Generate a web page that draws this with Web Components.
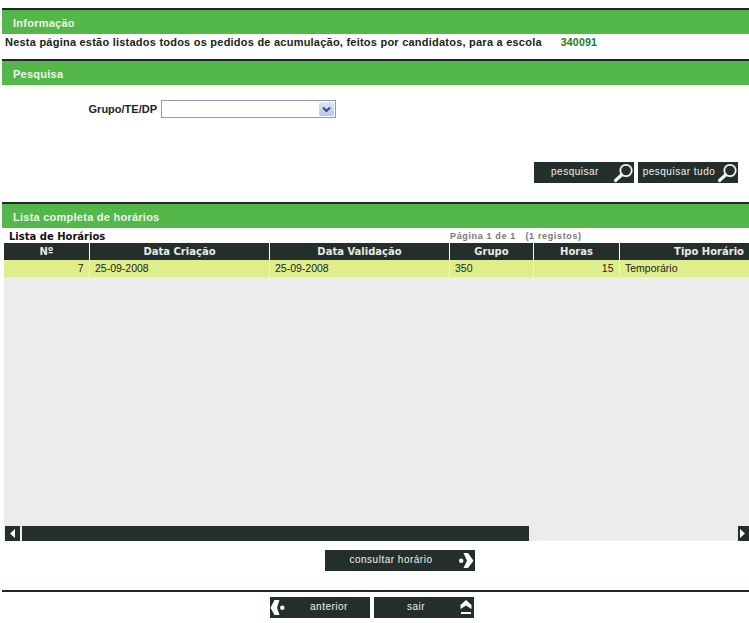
<!DOCTYPE html>
<html lang="pt"><head><meta charset="utf-8"><title>Horários</title>
<style>
html,body{margin:0;padding:0;background:#fff}
body{width:749px;height:623px;overflow:hidden;font-family:"Liberation Sans",Arial,sans-serif;font-size:11px;color:#111}
app-page{display:block}
</style></head><body>
<app-page></app-page>
<script>
const ICONS={
search:'<svg width="22" height="21" viewBox="0 0 22 21" style="margin-left:-4px"><circle cx="14" cy="8.500" r="5.700" fill="none" stroke="#f2f4f2" stroke-width="1.800"/><path d="M9.500 13 3.500 18.500" stroke="#f2f4f2" stroke-width="3.200" stroke-linecap="round"/></svg>',
right:'<svg width="18" height="21" viewBox="0 0 18 21"><circle cx="4.200" cy="10.700" r="2.200" fill="#fff"/><path d="M6.500 3h4.500l5.500 7.700L11 18H6.500l3.500-7.300z" fill="#fff"/></svg>',
left:'<svg width="18" height="21" viewBox="0 0 18 21"><path d="M4.500 3H9.500L7 10.700 9.500 18H4.500L.5 10.700z" fill="#fff"/><circle cx="12.300" cy="10.700" r="2.200" fill="#fff"/></svg>',
up:'<svg width="16" height="21" viewBox="0 0 16 21"><path d="M8 3 13.500 8v4L8 8.500 2.500 12V8z" fill="#fff"/><path d="M3 15h10v2H3z" fill="#fff"/></svg>'
};
class SectionBar extends HTMLElement{constructor(){super();this.attachShadow({mode:'open'}).innerHTML=`<style>
:host{display:block;margin-left:2px;border-top:2px solid #1f2a26;background:#53b74a;height:24px;box-sizing:content-box;color:#eef6ec;font:bold 11px/26px "Liberation Sans",Arial,sans-serif;padding-left:11px;letter-spacing:.25px}
</style><slot></slot>`}}
class ActionBtn extends HTMLElement{constructor(){super();const ic=this.getAttribute('icon'),lead=this.hasAttribute('lead');this.attachShadow({mode:'open'}).innerHTML=`<style>
:host{display:flex;align-items:center;box-sizing:border-box;width:var(--w,100px);height:21px;background:#242e2b;color:#f0f2f0;font:10px/20px "Liberation Sans",Arial,sans-serif;letter-spacing:.5px}
.t{flex:1;text-align:center;white-space:nowrap;align-self:flex-start}
.i{display:flex;flex:none}
svg{display:block}
</style>${lead?`<span class="i">${ICONS[ic]}</span>`:''}<span class="t"><slot></slot></span>${lead?'':`<span class="i">${ICONS[ic]}</span>`}`}}
class SearchForm extends HTMLElement{constructor(){super();this.attachShadow({mode:'open'}).innerHTML=`<style>
:host{display:block;height:117px;box-sizing:border-box}
.f{display:flex;align-items:center;padding:15px 0 0 0;height:18px;gap:4px}
label{width:157px;text-align:right;font:bold 11px "Liberation Sans",Arial,sans-serif;color:#222;flex:none}
.sel{width:175px;height:18px;box-sizing:border-box;border:1px solid #8f9cb8;background:#fff;display:flex;justify-content:flex-end;align-items:stretch;padding:1px}
.ar{width:15px;background:linear-gradient(#dfe6f8,#b6c5ee);border-radius:2px;display:flex;align-items:center;justify-content:center}
.b{display:flex;justify-content:flex-end;gap:4px;padding:44px 11px 0 0}
</style><div class="f"><label>Grupo/TE/DP</label><div class="sel"><div class="ar"><svg width="9" height="7" viewBox="0 0 9 7"><path d="M1 1.500 4.500 5 8 1.500" fill="none" stroke="#3d4f7f" stroke-width="2"/></svg></div></div></div>
<div class="b"><action-btn icon="search">pesquisar</action-btn><action-btn icon="search">pesquisar tudo</action-btn></div>`}}
class ScheduleGrid extends HTMLElement{constructor(){super();const cols='86px 180px 180px 84px 86px 130px';
this.attachShadow({mode:'open'}).innerHTML=`<style>
:host{display:block;margin-left:4px;width:745px;overflow:hidden}
.cap{display:flex;height:15px;font:bold 10px/17px "DejaVu Sans",Verdana,sans-serif;color:#111;padding-left:5px}
.cap b{width:441px;flex:none;white-space:nowrap}
.cap span{font:bold 9px/17px "Liberation Sans",Arial,sans-serif;color:#777;letter-spacing:.65px;white-space:pre}
.tb{height:298px;background:#ececec;display:flex;flex-direction:column}
.r{display:grid;grid-template-columns:${cols};height:17px}
.h div{background:#242e2b;color:#e8ece8;font:bold 10px/17px "DejaVu Sans",Verdana,sans-serif;text-align:center;border-right:1px solid #fff;box-sizing:border-box;white-space:nowrap}
.h div:last-child{text-align:right;padding-right:6px;border:0}
.d div{background:#dfee8a;font:10.500px/17px "Liberation Sans",Arial,sans-serif;color:#222;padding-left:5px;border-right:1px solid #f2f6d0;box-sizing:border-box;white-space:nowrap}
.d .n{text-align:right;padding:0 5.500px 0 0}
.sp{flex:1}
.sb{height:15px;display:flex;background:#ececec}
.sb i{display:flex;align-items:center;justify-content:center;width:15px;margin-left:1px;background:#242e2b;flex:none}
.th{width:507px;margin-left:2px;background:#242e2b}
.fill{flex:1}
</style><div class="cap"><b>Lista de Horários</b><span>Página 1 de 1   (1 registos)</span></div>
<div class="tb"><div class="r h"><div>Nº</div><div>Data Criação</div><div>Data Validação</div><div>Grupo</div><div>Horas</div><div>Tipo Horário</div></div>
<div class="r d"><div class="n">7</div><div>25-09-2008</div><div>25-09-2008</div><div>350</div><div class="n">15</div><div>Temporário</div></div>
<div class="sp"></div>
<div class="sb"><i><svg width="6" height="9" viewBox="0 0 6 9"><path d="M5 0v9L0 4.500z" fill="#fff"/></svg></i><div class="th"></div><div class="fill"></div><i style="width:11px;justify-content:flex-start;padding-left:2px;box-sizing:border-box"><svg width="6" height="9" viewBox="0 0 6 9"><path d="M0 0v9l5-4.500z" fill="#fff"/></svg></i></div></div>`}}
class AppPage extends HTMLElement{constructor(){super();this.attachShadow({mode:'open'}).innerHTML=`<style>
:host{display:block;padding-top:8px;height:615px}
.info{height:25px;padding-left:5px;font:bold 11px/17px "Liberation Sans",Arial,sans-serif;color:#222;letter-spacing:.23px;white-space:pre}
.info b{color:#1d7a1d;margin-left:19px;font-size:10.500px;letter-spacing:.2px}
.c{display:flex;justify-content:center;padding:9px 0 0 51px}
.rule{height:2px;background:#1f2a26;margin:19px 0 5px 2px}
.nav{display:flex;justify-content:center;gap:4px;padding-right:5px}
</style>
<section-bar>Informação</section-bar>
<div class="info">Nesta página estão listados todos os pedidos de acumulação, feitos por candidatos, para a escola<b>340091</b></div>
<section-bar>Pesquisa</section-bar>
<search-form></search-form>
<section-bar>Lista completa de horários</section-bar>
<schedule-grid></schedule-grid>
<div class="c"><action-btn icon="right" style="--w:150px">consultar horário</action-btn></div>
<div class="rule"></div>
<div class="nav"><action-btn icon="left" lead>anterior</action-btn><action-btn icon="up">sair</action-btn></div>`}}
customElements.define('section-bar',SectionBar);
customElements.define('action-btn',ActionBtn);
customElements.define('search-form',SearchForm);
customElements.define('schedule-grid',ScheduleGrid);
customElements.define('app-page',AppPage);
</script></body></html>
